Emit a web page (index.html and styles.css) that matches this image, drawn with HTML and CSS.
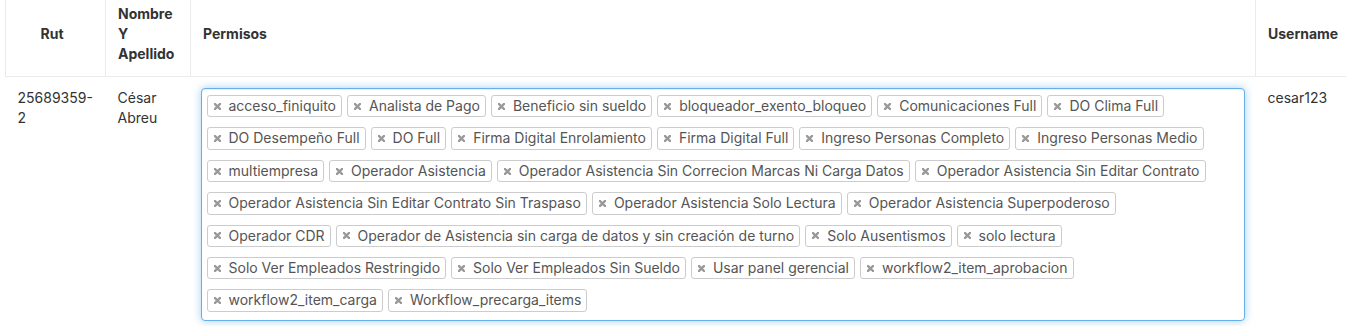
FILE: index.html
```html
<!DOCTYPE html>
<html lang="es">
<head>
<meta charset="utf-8">
<title>Usuarios</title>
<link rel="stylesheet" href="styles.css">
</head>
<body>
<table class="users">
  <colgroup>
    <col class="c-rut">
    <col class="c-name">
    <col class="c-perm">
    <col class="c-user">
  </colgroup>
  <thead>
    <tr>
      <th class="th-rut">Rut</th>
      <th>Nombre Y Apellido</th>
      <th>Permisos</th>
      <th>Username</th>
    </tr>
  </thead>
  <tbody>
    <tr>
      <td>25689359-2</td>
      <td>César Abreu</td>
      <td class="td-perm">
        <ul class="select-box">
          <li class="tag"><svg class="x" viewBox="0 0 7 7" aria-hidden="true"><path d="M1 1L6 6M6 1L1 6"/></svg>acceso_finiquito</li>
          <li class="tag"><svg class="x" viewBox="0 0 7 7" aria-hidden="true"><path d="M1 1L6 6M6 1L1 6"/></svg>Analista de Pago</li>
          <li class="tag"><svg class="x" viewBox="0 0 7 7" aria-hidden="true"><path d="M1 1L6 6M6 1L1 6"/></svg>Beneficio sin sueldo</li>
          <li class="tag"><svg class="x" viewBox="0 0 7 7" aria-hidden="true"><path d="M1 1L6 6M6 1L1 6"/></svg>bloqueador_exento_bloqueo</li>
          <li class="tag"><svg class="x" viewBox="0 0 7 7" aria-hidden="true"><path d="M1 1L6 6M6 1L1 6"/></svg>Comunicaciones Full</li>
          <li class="tag"><svg class="x" viewBox="0 0 7 7" aria-hidden="true"><path d="M1 1L6 6M6 1L1 6"/></svg>DO Clima Full</li>
          <li class="tag"><svg class="x" viewBox="0 0 7 7" aria-hidden="true"><path d="M1 1L6 6M6 1L1 6"/></svg>DO Desempeño Full</li>
          <li class="tag"><svg class="x" viewBox="0 0 7 7" aria-hidden="true"><path d="M1 1L6 6M6 1L1 6"/></svg>DO Full</li>
          <li class="tag"><svg class="x" viewBox="0 0 7 7" aria-hidden="true"><path d="M1 1L6 6M6 1L1 6"/></svg>Firma Digital Enrolamiento</li>
          <li class="tag"><svg class="x" viewBox="0 0 7 7" aria-hidden="true"><path d="M1 1L6 6M6 1L1 6"/></svg>Firma Digital Full</li>
          <li class="tag"><svg class="x" viewBox="0 0 7 7" aria-hidden="true"><path d="M1 1L6 6M6 1L1 6"/></svg>Ingreso Personas Completo</li>
          <li class="tag"><svg class="x" viewBox="0 0 7 7" aria-hidden="true"><path d="M1 1L6 6M6 1L1 6"/></svg>Ingreso Personas Medio</li>
          <li class="tag"><svg class="x" viewBox="0 0 7 7" aria-hidden="true"><path d="M1 1L6 6M6 1L1 6"/></svg>multiempresa</li>
          <li class="tag"><svg class="x" viewBox="0 0 7 7" aria-hidden="true"><path d="M1 1L6 6M6 1L1 6"/></svg>Operador Asistencia</li>
          <li class="tag"><svg class="x" viewBox="0 0 7 7" aria-hidden="true"><path d="M1 1L6 6M6 1L1 6"/></svg>Operador Asistencia Sin Correcion Marcas Ni Carga Datos</li>
          <li class="tag"><svg class="x" viewBox="0 0 7 7" aria-hidden="true"><path d="M1 1L6 6M6 1L1 6"/></svg>Operador Asistencia Sin Editar Contrato</li>
          <li class="tag"><svg class="x" viewBox="0 0 7 7" aria-hidden="true"><path d="M1 1L6 6M6 1L1 6"/></svg>Operador Asistencia Sin Editar Contrato Sin Traspaso</li>
          <li class="tag"><svg class="x" viewBox="0 0 7 7" aria-hidden="true"><path d="M1 1L6 6M6 1L1 6"/></svg>Operador Asistencia Solo Lectura</li>
          <li class="tag"><svg class="x" viewBox="0 0 7 7" aria-hidden="true"><path d="M1 1L6 6M6 1L1 6"/></svg>Operador Asistencia Superpoderoso</li>
          <li class="tag"><svg class="x" viewBox="0 0 7 7" aria-hidden="true"><path d="M1 1L6 6M6 1L1 6"/></svg>Operador CDR</li>
          <li class="tag"><svg class="x" viewBox="0 0 7 7" aria-hidden="true"><path d="M1 1L6 6M6 1L1 6"/></svg>Operador de Asistencia sin carga de datos y sin creación de turno</li>
          <li class="tag"><svg class="x" viewBox="0 0 7 7" aria-hidden="true"><path d="M1 1L6 6M6 1L1 6"/></svg>Solo Ausentismos</li>
          <li class="tag"><svg class="x" viewBox="0 0 7 7" aria-hidden="true"><path d="M1 1L6 6M6 1L1 6"/></svg>solo lectura</li>
          <li class="tag"><svg class="x" viewBox="0 0 7 7" aria-hidden="true"><path d="M1 1L6 6M6 1L1 6"/></svg>Solo Ver Empleados Restringido</li>
          <li class="tag"><svg class="x" viewBox="0 0 7 7" aria-hidden="true"><path d="M1 1L6 6M6 1L1 6"/></svg>Solo Ver Empleados Sin Sueldo</li>
          <li class="tag"><svg class="x" viewBox="0 0 7 7" aria-hidden="true"><path d="M1 1L6 6M6 1L1 6"/></svg>Usar panel gerencial</li>
          <li class="tag"><svg class="x" viewBox="0 0 7 7" aria-hidden="true"><path d="M1 1L6 6M6 1L1 6"/></svg>workflow2_item_aprobacion</li>
          <li class="tag"><svg class="x" viewBox="0 0 7 7" aria-hidden="true"><path d="M1 1L6 6M6 1L1 6"/></svg>workflow2_item_carga</li>
          <li class="tag"><svg class="x" viewBox="0 0 7 7" aria-hidden="true"><path d="M1 1L6 6M6 1L1 6"/></svg>Workflow_precarga_items</li>
        </ul>
      </td>
      <td>cesar123</td>
    </tr>
  </tbody>
</table>
</body>
</html>
```

FILE: styles.css
```css
html, body {
  margin: 0;
  padding: 0;
  overflow: hidden;
  background: #fff;
}

body {
  font-family: Inter, "Liberation Sans", sans-serif;
  font-size: 14px;
  line-height: 20px;
  color: #333;
}

.users {
  border-collapse: collapse;
  table-layout: fixed;
  width: 1360px;
  margin: -8px 0 0 5px;
}

.c-rut { width: 100px; }
.c-name { width: 85px; }
.c-perm { width: 1065px; }
.c-user { width: 110px; }

.users th {
  font-weight: 700;
  text-align: left;
  vertical-align: middle;
  padding: 12px 12px;
  border: 1px solid #ebebeb;
  border-top: none;
  color: #333;
}

.users th.th-rut {
  text-align: center;
  padding-right: 19px;
}

.users td {
  vertical-align: top;
  padding: 11px 12px;
  color: #333;
}

.users td.td-perm {
  padding: 11px 11px 11px 10px;
}

.select-box {
  list-style: none;
  margin: 0;
  padding: 6px 5px 8px 5px;
  display: flex;
  flex-wrap: wrap;
  column-gap: 5px;
  row-gap: 10px;
  border: 1px solid #66afe9;
  border-radius: 4px;
  box-shadow: inset 0 1px 1px rgba(0, 0, 0, 0.075), 0 0 8px rgba(102, 175, 233, 0.6);
  background: #fff;
}

.tag {
  display: flex;
  align-items: center;
  border: 1px solid #ccc;
  border-radius: 3px;
  padding: 0 5px 0 5px;
  line-height: 20.4px;
  color: #555;
  background: #fff;
  white-space: nowrap;
}

.x {
  width: 7px;
  height: 7px;
  margin: 0 8px 0 1px;
  flex: none;
  fill: none;
  stroke: #999;
  stroke-width: 2.4;
  stroke-linecap: square;
}
```
